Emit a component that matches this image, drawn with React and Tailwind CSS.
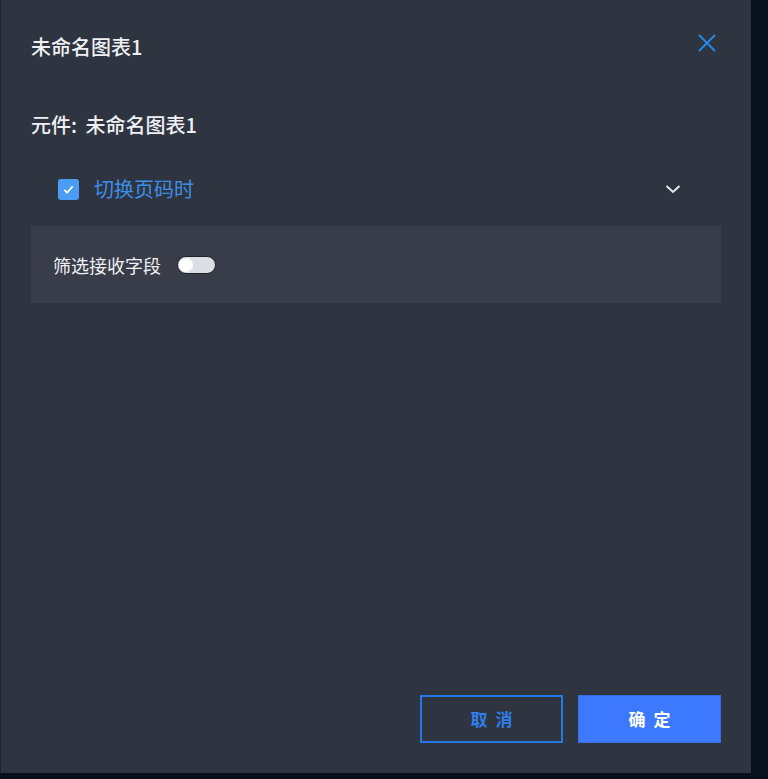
import React, { useState } from 'react';

const font = { fontFamily: '"Noto Sans CJK SC", "Noto Sans", sans-serif' };

const App = () => {
  const [checked, setChecked] = useState(true);
  const [filterOn, setFilterOn] = useState(false);

  return (
    <div className="w-[768px] h-[779px] bg-[#07111c] overflow-hidden" style={font}>
      <div className="w-[751px] h-[773px] bg-[#2f3540] border-l border-[#1a2230] flex flex-col">
        {/* Header */}
        <div className="flex items-start justify-between pl-[30px] pr-[34px] pt-[32px]">
          <h2 className="text-[20px] leading-[30px] font-medium text-[#eef0f3]">未命名图表1</h2>
          <button className="text-[#2188e8] mt-[1px]">
            <svg width="20" height="20" viewBox="0 0 20 20" fill="none" stroke="currentColor" strokeWidth="2">
              <path d="M2 2 L18 18 M18 2 L2 18" />
            </svg>
          </button>
        </div>

        {/* Body */}
        <div className="px-[30px] pt-[48px] flex-1">
          <p className="text-[20px] leading-[30px] font-medium text-[#eef0f3]">
            元件<span className="mr-[4px]">:</span> 未命名图表1
          </p>

          <div className="mt-[35px] flex items-center justify-between pl-[27px] pr-[40px]">
            <label className="flex items-center gap-[15px] cursor-pointer">
              <span
                onClick={() => setChecked(!checked)}
                className="w-[21px] h-[21px] rounded-[3px] bg-[#4a9cf5] flex items-center justify-center"
              >
                {checked && (
                  <svg width="13" height="13" viewBox="0 0 14 14" fill="none" stroke="#fff" strokeWidth="2">
                    <path d="M2.5 7.5 L5.5 10.5 L11.5 3.5" />
                  </svg>
                )}
              </span>
              <span className="text-[20px] leading-[28px] text-[#3d8ee8]">切换页码时</span>
            </label>
            <svg width="16" height="10" viewBox="0 0 16 10" fill="none" stroke="#e4e7ec" strokeWidth="2">
              <path d="M1.5 2 L8 8 L14.5 2" />
            </svg>
          </div>

          <div className="mt-[23px] bg-[#383d49] h-[77px] flex items-center pl-[22px] gap-[16px]">
            <span className="text-[18px] leading-[26px] text-[#eef0f3]">筛选接收字段</span>
            <button
              onClick={() => setFilterOn(!filterOn)}
              className="w-[39px] h-[18px] rounded-full bg-[#dcdee5] border border-[#1f2329] relative"
            >
              <span className="absolute left-[1px] top-[1px] w-[14px] h-[14px] rounded-full bg-white" />
            </button>
          </div>
        </div>

        {/* Footer */}
        <div className="flex justify-end gap-[15px] pr-[30px] pb-[30px]">
          <button className="w-[143px] h-[48px] border-2 border-[#2478e6] text-[#2f7fe8] text-[17px] font-bold tracking-[8px] pl-[8px]">
            取消
          </button>
          <button className="w-[143px] h-[48px] bg-[#3d79fe] border border-[#3a6fe0] text-white text-[17px] font-bold tracking-[8px] pl-[8px]">
            确定
          </button>
        </div>
      </div>
    </div>
  );
};

export default App;
